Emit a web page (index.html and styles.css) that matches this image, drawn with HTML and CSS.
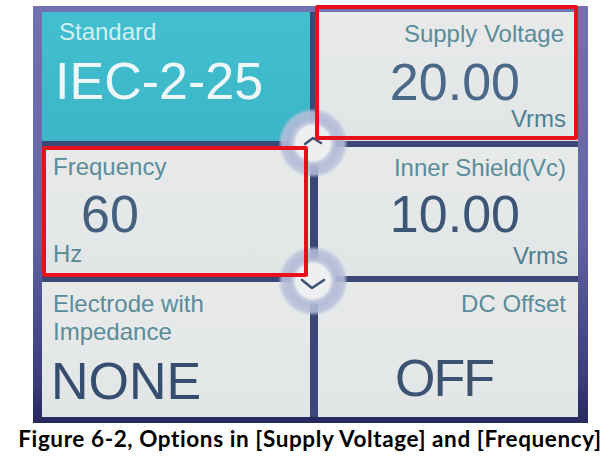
FILE: index.html
```html
<!DOCTYPE html>
<html>
<head>
<meta charset="utf-8">
<link rel="stylesheet" href="styles.css">
</head>
<body>
<div class="page">
  <div class="screen">
    <div class="grid">
      <div class="tile tile-standard">
        <div class="label">Standard</div>
        <div class="value">IEC-2-25</div>
      </div>
      <div class="tile tile-right tile-supply">
        <div class="label">Supply Voltage</div>
        <div class="value">20.00</div>
        <div class="unit">Vrms</div>
      </div>
      <div class="tile tile-freq">
        <div class="label">Frequency</div>
        <div class="value">60</div>
        <div class="unit">Hz</div>
      </div>
      <div class="tile tile-right tile-shield">
        <div class="label">Inner Shield(Vc)</div>
        <div class="value">10.00</div>
        <div class="unit">Vrms</div>
      </div>
      <div class="tile tile-electrode">
        <div class="label">Electrode with<br>Impedance</div>
        <div class="value">NONE</div>
      </div>
      <div class="tile tile-right tile-dc">
        <div class="label">DC Offset</div>
        <div class="value">OFF</div>
      </div>
    </div>
    <div class="knob knob-up">
      <svg width="20" height="10" viewBox="0 0 20 10"><polyline points="2,8 10,2 18,7" fill="none" stroke="#3d5070" stroke-width="2.4" stroke-linecap="round" stroke-linejoin="round"/></svg>
    </div>
    <div class="knob knob-down">
      <svg width="26" height="12" viewBox="0 0 26 12"><polyline points="2,2 12,10 24,2" fill="none" stroke="#3d5070" stroke-width="2.6" stroke-linecap="round" stroke-linejoin="round"/></svg>
    </div>
    <div class="highlight hl-supply"></div>
    <div class="highlight hl-freq"></div>
  </div>
  <p class="caption">Figure 6-2, Options in [Supply Voltage] and [Frequency]</p>
</div>
</body>
</html>
```
FILE: styles.css
```css
html, body {
  margin: 0;
  padding: 0;
  background: #ffffff;
}

.page {
  width: 610px;
  height: 469px;
  padding-top: 6px;
  box-sizing: border-box;
  overflow: hidden;
}

.screen {
  position: relative;
  margin-left: 33px;
  width: 555px;
  height: 417px;
  box-sizing: border-box;
  padding: 6px 10px 6px 9px;
  background: linear-gradient(to bottom, #7272b2 0%, #6262a6 55%, #3a3c7c 90%, #26285e 100%);
}

.grid {
  display: grid;
  grid-template-columns: 268px 260px;
  grid-template-rows: 129px 129px 135px;
  gap: 6px 8px;
  height: 100%;
  background: #3a4878;
}

.tile {
  display: flex;
  flex-direction: column;
  align-items: flex-start;
  box-sizing: border-box;
  background: linear-gradient(to bottom, #e8eaea, #e2e5e6);
  font-family: "Liberation Sans", Arial, sans-serif;
  overflow: hidden;
}

.tile-right {
  align-items: flex-end;
}

.label {
  font-size: 24px;
  line-height: 24px;
  color: #5a8c9a;
  white-space: nowrap;
}

.value {
  font-size: 52px;
  line-height: 52px;
  color: #3e5676;
  white-space: nowrap;
}

.unit {
  font-size: 24px;
  line-height: 24px;
  color: #4e8090;
}

.tile-standard {
  background: linear-gradient(to bottom, #42bfcf, #3cb6c8);
  padding: 8px 0 0 17px;
}

.tile-standard .label {
  color: #d4eef2;
}

.tile-standard .value {
  color: #eef8fa;
  margin-top: 11px;
  margin-left: -4px;
}

.tile-supply {
  padding: 10px 14px 0 0;
}

.tile-supply .value {
  margin-top: 10px;
  margin-right: 44px;
  color: #4a6888;
}

.tile-supply .unit {
  margin-top: -1px;
  margin-right: -2px;
}

.tile-freq {
  padding: 8px 0 0 11px;
}

.tile-freq .value {
  margin-top: 9px;
  margin-left: 28px;
  color: #44607e;
}

.tile-freq .unit {
  margin-top: 2px;
  color: #5a8a98;
}

.tile-shield {
  padding: 9px 12px 0 0;
}

.tile-shield .value {
  margin-top: 8px;
  margin-right: 46px;
}

.tile-shield .unit {
  margin-top: 4px;
  margin-right: -2px;
}

.tile-electrode {
  padding: 8px 0 0 11px;
}

.tile-electrode .label {
  line-height: 28px;
}

.tile-electrode .value {
  margin-top: 9px;
  margin-left: -2px;
  color: #354d6f;
}

.tile-dc {
  padding: 10px 12px 0 0;
}

.tile-dc .value {
  align-self: flex-start;
  margin-top: 36px;
  margin-left: 77px;
  letter-spacing: -2px;
  color: #3b5370;
}

.knob {
  position: absolute;
  width: 70px;
  height: 70px;
  border-radius: 50%;
  display: flex;
  align-items: center;
  justify-content: center;
  background: radial-gradient(circle at center, #edeff0 0, #edeff0 17px, #c2c9de 20px, rgba(178, 186, 214, 0.92) 24px, rgba(184, 192, 220, 0.85) 31px, rgba(196, 202, 226, 0) 35px);
}

.knob-up {
  left: 245px;
  top: 102px;
}

.knob-up svg {
  margin-top: -4px;
}

.knob-down {
  left: 245px;
  top: 240px;
}

.knob-down svg {
  margin-top: 6px;
}

.highlight {
  position: absolute;
  box-sizing: border-box;
  border: 4px solid #e8101a;
  border-radius: 2px;
}

.hl-supply {
  left: 282px;
  top: -1px;
  width: 263px;
  height: 135px;
}

.hl-freq {
  left: 9px;
  top: 140px;
  width: 266px;
  height: 131px;
}

.caption {
  margin: 4px 0 0 0;
  padding-left: 10px;
  text-align: center;
  font-family: Lato, "Liberation Sans", sans-serif;
  font-weight: 700;
  font-size: 22.5px;
  line-height: 24px;
  letter-spacing: 0.6px;
  color: #000000;
  white-space: nowrap;
}
```
